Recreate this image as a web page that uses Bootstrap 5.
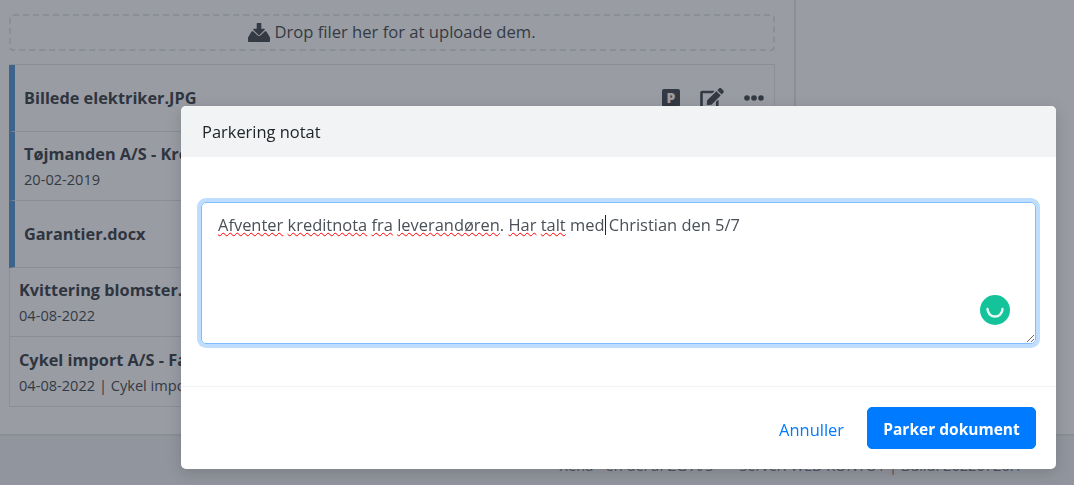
<!DOCTYPE html>
<html lang="da">
<head>
    <meta charset="UTF-8">
    <meta name="viewport" content="width=device-width, initial-scale=1.0">
    <title>Parkering notat</title>
    <link href="https://cdn.jsdelivr.net/npm/bootstrap@5.3.0/dist/css/bootstrap.min.css" rel="stylesheet">
    <style>
        html, body { height: 100%; overflow: hidden; }
        body { font-family: "Open Sans", "Liberation Sans", sans-serif; color: #343a40; background: #fff; }
        .page-shell { width: 796px; height: 434px; padding: 14px 19px 0 9px; border-right: 2px solid #dee2e6; }
        .drop-zone { height: 37px; border: 2px dashed #dee2e6; border-radius: 4px; color: #343a40; font-size: 16.6px; margin-bottom: 13px; }
        .drop-zone svg { width: 22px; height: 19px; fill: currentColor; margin-right: 4px; }
        .file-list { width: 766px; border: 1px solid #dee2e6; }
        .file-row { padding: 0 10px 0 9px; border-bottom: 1px solid #dee2e6; }
        .file-row:last-child { border-bottom: 0; }
        .file-row.is-parked { border-left: 6px solid #4a8ed0; margin-left: -1px; padding-left: 9px; }
        .file-name { font-size: 16.3px; font-weight: 700; line-height: 24px; color: #2b3036; }
        .file-meta { font-size: 14.6px; line-height: 21px; margin-top: 3px; }
        .row-h-67 { height: 67px; }
        .row-h-69 { height: 69px; }
        .row-icons { gap: 20px; }
        .row-icons svg { fill: #343a40; }
        .park-badge { width: 18px; height: 18px; background: #343a40; color: #fff; font-size: 14px; font-weight: 800; line-height: 18px; text-align: center; border-radius: 2px; }
        .page-foot { height: 51px; border-top: 2px solid #dee2e6; background: #eff0f2; font-size: 14.6px; line-height: 21px; padding: 19px 52px 0 0; color: #6c757d; gap: 26px; }
        .dim-layer { position: fixed; inset: 0; background: rgba(52, 58, 72, .5); }
        .note-dialog { position: fixed; left: 181px; top: 106px; width: 875px; height: 363px; background: #fff; border-radius: 5px; box-shadow: 0 4px 16px rgba(0, 0, 0, .15); overflow: hidden; }
        .note-head { height: 51px; background: #f1f3f5; padding: 1px 21px 0; font-size: 16.45px; color: #212529; }
        .note-body { height: 230px; padding: 45px 20px 0 20px; border-bottom: 1px solid #f1f3f5; }
        .note-input { position: relative; height: 142px; border: 1px solid #80bdff; border-radius: 5px; box-shadow: 0 0 0 4px #bfdeff; padding: 10px 16px; font-size: 16.45px; line-height: 24px; color: #495057; resize: both; overflow: auto; }
        .spell { text-decoration: underline wavy #f00 1px; text-underline-offset: 1px; }
        .caret-mark { display: inline-block; width: 1px; height: 20px; background: #212529; vertical-align: -4px; margin-right: -1px; }
        .g-dot { position: absolute; right: 25px; bottom: 18px; width: 30px; height: 30px; border-radius: 50%; background: #15c39a; }
        .g-dot svg { display: block; width: 30px; height: 30px; }
        .note-foot { height: 82px; padding: 20px 20px 0 0; }
        .cancel-link { color: #007bff; font-size: 16.45px; line-height: 24px; text-decoration: none; margin: 11px 23px 0 0; }
        .park-btn { height: 42px; width: 169px; background: #007bff; border-color: #007bff; font-size: 15.5px; font-weight: 700; border-radius: 5px; padding: 4px 0 0; }
    </style>
</head>
<body>
    <div class="page-shell">
        <div class="drop-zone d-flex align-items-center justify-content-center">
            <svg viewBox="0 0 512 442"><path d="M216 0h80c8 0 14 6 14 14v118h68c14 0 21 17 11 27L268 280c-7 7-17 7-24 0L123 159c-10-10-3-27 11-27h68V14c0-8 6-14 14-14zM100 190h20l96 96c22 22 58 22 80 0l96-96h20c9 0 17 5 21 13l79 137v78c0 13-11 24-24 24H24c-13 0-24-11-24-24v-78l79-137c4-8 12-13 21-13z"/></svg>
            Drop filer her for at uploade dem.
        </div>
        <div class="file-list">
            <div class="file-row is-parked row-h-67 d-flex align-items-center justify-content-between">
                <div class="file-name">Billede elektriker.JPG</div>
                <div class="row-icons d-flex align-items-center">
                    <div class="park-badge">P</div>
                    <svg viewBox="0 0 576 512" width="24" height="21"><path d="M402.6 83.2l90.2 90.2c3.8 3.8 3.8 10 0 13.8L274.4 405.6l-92.8 10.3c-12.4 1.4-22.9-9.1-21.5-21.5l10.3-92.8L388.8 83.2c3.8-3.8 10-3.8 13.8 0zm162-22.9l-48.8-48.8c-15.2-15.2-39.9-15.2-55.2 0l-35.4 35.4c-3.8 3.8-3.8 10 0 13.8l90.2 90.2c3.8 3.8 10 3.8 13.8 0l35.4-35.4c15.2-15.3 15.2-40 0-55.2zM384 346.2V448H64V128h229.8c3.2 0 6.2-1.3 8.5-3.5l40-40c7.6-7.6 2.2-20.5-8.5-20.5H48C21.5 64 0 85.5 0 112v352c0 26.5 21.5 48 48 48h352c26.5 0 48-21.5 48-48V306.2c0-10.7-12.9-16-20.5-8.5l-40 40c-2.2 2.3-3.5 5.3-3.5 8.5z"/></svg>
                    <svg viewBox="0 0 20 6" width="20" height="6"><circle cx="3" cy="3" r="2.8"/><circle cx="10" cy="3" r="2.8"/><circle cx="17" cy="3" r="2.8"/></svg>
                </div>
            </div>
            <div class="file-row is-parked row-h-69 d-flex flex-column justify-content-center">
                <div class="file-name">Tøjmanden A/S - Kreditnota</div>
                <div class="file-meta">20-02-2019</div>
            </div>
            <div class="file-row is-parked row-h-67 d-flex align-items-center">
                <div class="file-name">Garantier.docx</div>
            </div>
            <div class="file-row row-h-69 d-flex flex-column justify-content-center">
                <div class="file-name">Kvittering blomster.pdf</div>
                <div class="file-meta">04-08-2022</div>
            </div>
            <div class="file-row row-h-69 d-flex flex-column justify-content-center">
                <div class="file-name">Cykel import A/S - Faktura</div>
                <div class="file-meta">04-08-2022 | Cykel import A/S</div>
            </div>
        </div>
    </div>
    <div class="page-foot d-flex justify-content-end">
        <span>Xena - en del af ZG A/S</span>
        <span>Server: WEB-KONTO1 | Build: 20220726.1</span>
    </div>

    <div class="dim-layer"></div>
    <div class="note-dialog">
        <div class="note-head d-flex align-items-center">Parkering notat</div>
        <div class="note-body">
            <div class="note-input"><span class="spell">Afventer</span> <span class="spell">kreditnota</span> <span class="spell">fra</span> <span class="spell">leverandøren</span>. <span class="spell">Har</span> <span class="spell">talt</span> med<span class="caret-mark"></span> Christian den 5/7
                <div class="g-dot"><svg viewBox="0 0 30 30"><path d="M7.5 14a7.5 7.5 0 0 0 15 0" fill="none" stroke="#fff" stroke-width="2.4" stroke-linecap="round" opacity=".9"/></svg></div>
            </div>
        </div>
        <div class="note-foot d-flex justify-content-end align-items-start">
            <a href="#" class="cancel-link">Annuller</a>
            <button type="button" class="btn btn-primary park-btn">Parker dokument</button>
        </div>
    </div>

    <script src="https://cdn.jsdelivr.net/npm/bootstrap@5.3.0/dist/js/bootstrap.bundle.min.js"></script>
</body>
</html>
